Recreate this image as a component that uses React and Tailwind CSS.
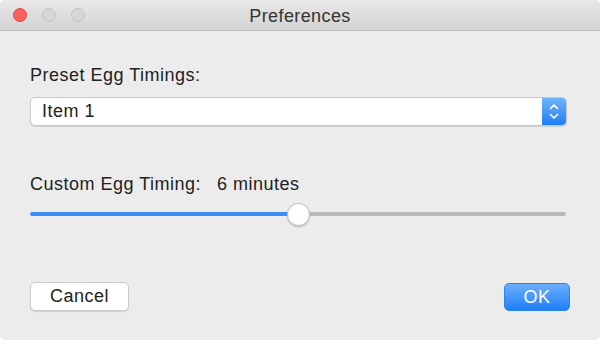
import React from 'react';

function TrafficLight({ color, border }) {
  return <div className={`w-[14px] h-[14px] rounded-full border ${color} ${border}`} />;
}

export default function App() {
  return (
    <div className="w-[600px] h-[340px] bg-[#ececec] rounded-[5px] overflow-hidden flex flex-col font-['Liberation_Sans',Arial,sans-serif] text-[#222]">
      {/* Title bar */}
      <div className="relative h-[31px] shrink-0 bg-gradient-to-b from-[#e8e8e8] to-[#d3d3d3] border-b border-[#bdbdbd] flex items-center">
        <div className="flex items-center gap-[15px] pl-[13px]">
          <TrafficLight color="bg-[#fc605c]" border="border-[#de4a45]" />
          <TrafficLight color="bg-[#d6d6d6]" border="border-[#c2c2c2]" />
          <TrafficLight color="bg-[#d6d6d6]" border="border-[#c2c2c2]" />
        </div>
        <div className="absolute inset-0 flex items-center justify-center pt-[2px] text-[18px] tracking-[0.4px] text-[#333] pointer-events-none">
          Preferences
        </div>
      </div>

      {/* Body */}
      <div className="flex-1 flex flex-col px-[30px] pt-[34px] text-[18px] tracking-[0.5px]">
        <div className="leading-[20px]">Preset Egg Timings:</div>

        <div className="mt-[12px] h-[29px] flex rounded-[5px] bg-white border border-[#c8c8c8] shadow-[0_1px_1px_rgba(0,0,0,0.12)] overflow-hidden w-[537px]">
          <div className="flex-1 flex items-center pl-[11px]">Item 1</div>
          <div className="w-[24px] bg-gradient-to-b from-[#6cb3fa] to-[#1a80f5] flex items-center justify-center">
            <svg width="10" height="17" viewBox="0 0 10 17" fill="none" stroke="white" strokeWidth="1.6" strokeLinecap="round" strokeLinejoin="round">
              <path d="M1.5 5.5 L5 2 L8.5 5.5" />
              <path d="M1.5 11.5 L5 15 L8.5 11.5" />
            </svg>
          </div>
        </div>

        <div className="mt-[48px] leading-[20px] flex gap-[16px]">
          <span>Custom Egg Timing:</span>
          <span>6 minutes</span>
        </div>

        <div className="relative mt-[8px] h-[24px] w-[536px] flex items-center">
          <div className="w-[268px] h-[4px] rounded-l-full bg-[#3d8df5]" />
          <div className="flex-1 h-[4px] rounded-r-full bg-[#b9b9b9]" />
          <div className="absolute left-[257px] top-[1px] w-[23px] h-[23px] rounded-full bg-white border border-[#c4c4c4] shadow-[0_1px_2px_rgba(0,0,0,0.2)]" />
        </div>

        <div className="mt-[56px] flex justify-between items-center">
          <button className="w-[99px] h-[29px] rounded-[5px] bg-white border border-[#cacaca] shadow-[0_1px_1px_rgba(0,0,0,0.12)] text-[#222]">
            Cancel
          </button>
          <button className="w-[66px] h-[28px] rounded-[5px] bg-gradient-to-b from-[#6aaffb] to-[#1b7ff5] border border-[#2d83ee] text-white">
            OK
          </button>
        </div>
      </div>
    </div>
  );
}
